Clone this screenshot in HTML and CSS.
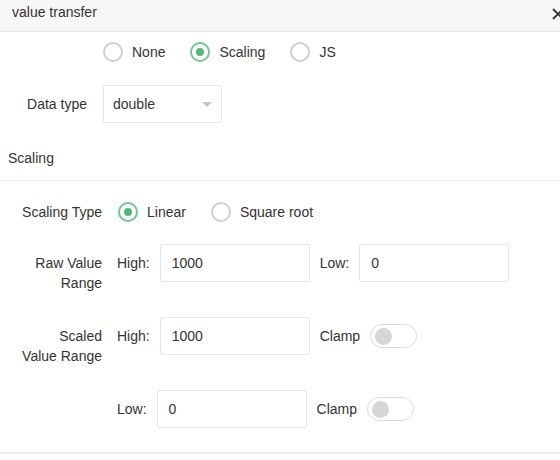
FILE: index.html
```html
<!DOCTYPE html>
<html>
<head>
<meta charset="utf-8">
<link rel="stylesheet" href="styles.css">
</head>
<body>
<div class="dialog">
  <div class="header">
    <span class="title">value transfer</span>
    <svg class="close" width="12" height="12" viewBox="0 0 12 12"><path d="M1 1L11 11M11 1L1 11" stroke="#333" stroke-width="1.8" fill="none"/></svg>
  </div>

  <div class="mode-row">
    <span class="opt"><span class="radio"></span>None</span>
    <span class="opt"><span class="radio checked"></span>Scaling</span>
    <span class="opt"><span class="radio"></span>JS</span>
  </div>

  <div class="field">
    <span class="field-label">Data type</span>
    <div class="select"><span>double</span><span class="caret"></span></div>
  </div>

  <div class="section-title">Scaling</div>

  <div class="form">
    <div class="row row-radio">
      <div class="row-label">Scaling Type</div>
      <div class="row-body">
        <span class="opt"><span class="radio checked"></span>Linear</span>
        <span class="opt"><span class="radio"></span>Square root</span>
      </div>
    </div>

    <div class="row">
      <div class="row-label">Raw Value<br>Range</div>
      <div class="row-body">
        <span class="txt">High:</span>
        <div class="input">1000</div>
        <span class="txt">Low:</span>
        <div class="input">0</div>
      </div>
    </div>

    <div class="row">
      <div class="row-label">Scaled<br>Value Range</div>
      <div class="row-body">
        <span class="txt">High:</span>
        <div class="input">1000</div>
        <span class="txt">Clamp</span>
        <span class="switch"><span class="knob"></span></span>
      </div>
    </div>

    <div class="row">
      <div class="row-label"></div>
      <div class="row-body">
        <span class="txt">Low:</span>
        <div class="input">0</div>
        <span class="txt">Clamp</span>
        <span class="switch"><span class="knob"></span></span>
      </div>
    </div>
  </div>

  <div class="footer-line"></div>
</div>
</body>
</html>
```

FILE: styles.css
```css
html, body {
  margin: 0;
  padding: 0;
  overflow: hidden;
  background: #fff;
}
body {
  font-family: "Liberation Sans", Arial, sans-serif;
  font-size: 14px;
  color: #333;
}
.dialog {
  width: 572px;
  height: 460px;
  background: #fff;
}
.header {
  height: 32px;
  box-sizing: border-box;
  background: #f7f7f7;
  border-bottom: 1px solid #e9e9e9;
  display: flex;
  align-items: flex-start;
  justify-content: space-between;
  padding: 2px 8px 0 12px;
  line-height: 20px;
}
.close {
  margin-top: 6px;
}
.mode-row {
  height: 40px;
  display: flex;
  align-items: center;
  padding-left: 103px;
}
.opt {
  display: inline-flex;
  align-items: center;
  line-height: 20px;
  margin-right: 25px;
}
.radio {
  width: 20px;
  height: 20px;
  box-sizing: border-box;
  border: 2px solid #cfcfcf;
  border-radius: 50%;
  margin-right: 9px;
  display: inline-flex;
  align-items: center;
  justify-content: center;
  background: #fff;
}
.radio.checked {
  border-color: #72c693;
}
.radio.checked::after {
  content: "";
  width: 8px;
  height: 8px;
  border-radius: 50%;
  background: #52b876;
}
.field {
  display: flex;
  align-items: center;
  margin-top: 13px;
}
.field-label {
  width: 87px;
  text-align: right;
  margin-right: 16px;
}
.select {
  width: 119px;
  height: 38px;
  box-sizing: border-box;
  border: 1px solid #e6e6e6;
  border-radius: 2px;
  display: flex;
  align-items: center;
  justify-content: space-between;
  padding: 0 9px 0 9px;
}
.caret {
  width: 0;
  height: 0;
  border-left: 5px solid transparent;
  border-right: 5px solid transparent;
  border-top: 5px solid #c4c4c4;
  margin-top: 1px;
}
.section-title {
  margin-top: 25px;
  padding: 0 8px 12px;
  line-height: 20px;
  border-bottom: 1px solid #f0f0f0;
}
.form {
  padding-top: 21px;
}
.row {
  display: flex;
  align-items: flex-start;
  margin-bottom: 24px;
}
.row-label {
  width: 102px;
  text-align: right;
  line-height: 20px;
  padding-top: 9px;
  margin-right: 15px;
  flex-shrink: 0;
}
.row-body {
  display: flex;
  align-items: center;
  gap: 10px;
}
.row-radio {
  align-items: center;
  margin-bottom: 22px;
}
.row-radio .row-label {
  padding-top: 0;
  margin-right: 16px;
}
.row-radio .row-body {
  gap: 0;
}
.input {
  width: 150px;
  height: 38px;
  box-sizing: border-box;
  border: 1px solid #e6e6e6;
  border-radius: 2px;
  padding: 0 11px;
  display: flex;
  align-items: center;
}
.switch {
  width: 47px;
  height: 24px;
  box-sizing: border-box;
  border: 1px solid #dcdcdc;
  border-radius: 12px;
  display: flex;
  align-items: center;
  padding-left: 4px;
  background: #fff;
}
.knob {
  width: 17px;
  height: 17px;
  border-radius: 50%;
  background: #d6d6d6;
}
.footer-line {
  margin-top: 1px;
  height: 4px;
  border-top: 1px solid #ececec;
  background: linear-gradient(#f6f6f6, #fff);
}
```
